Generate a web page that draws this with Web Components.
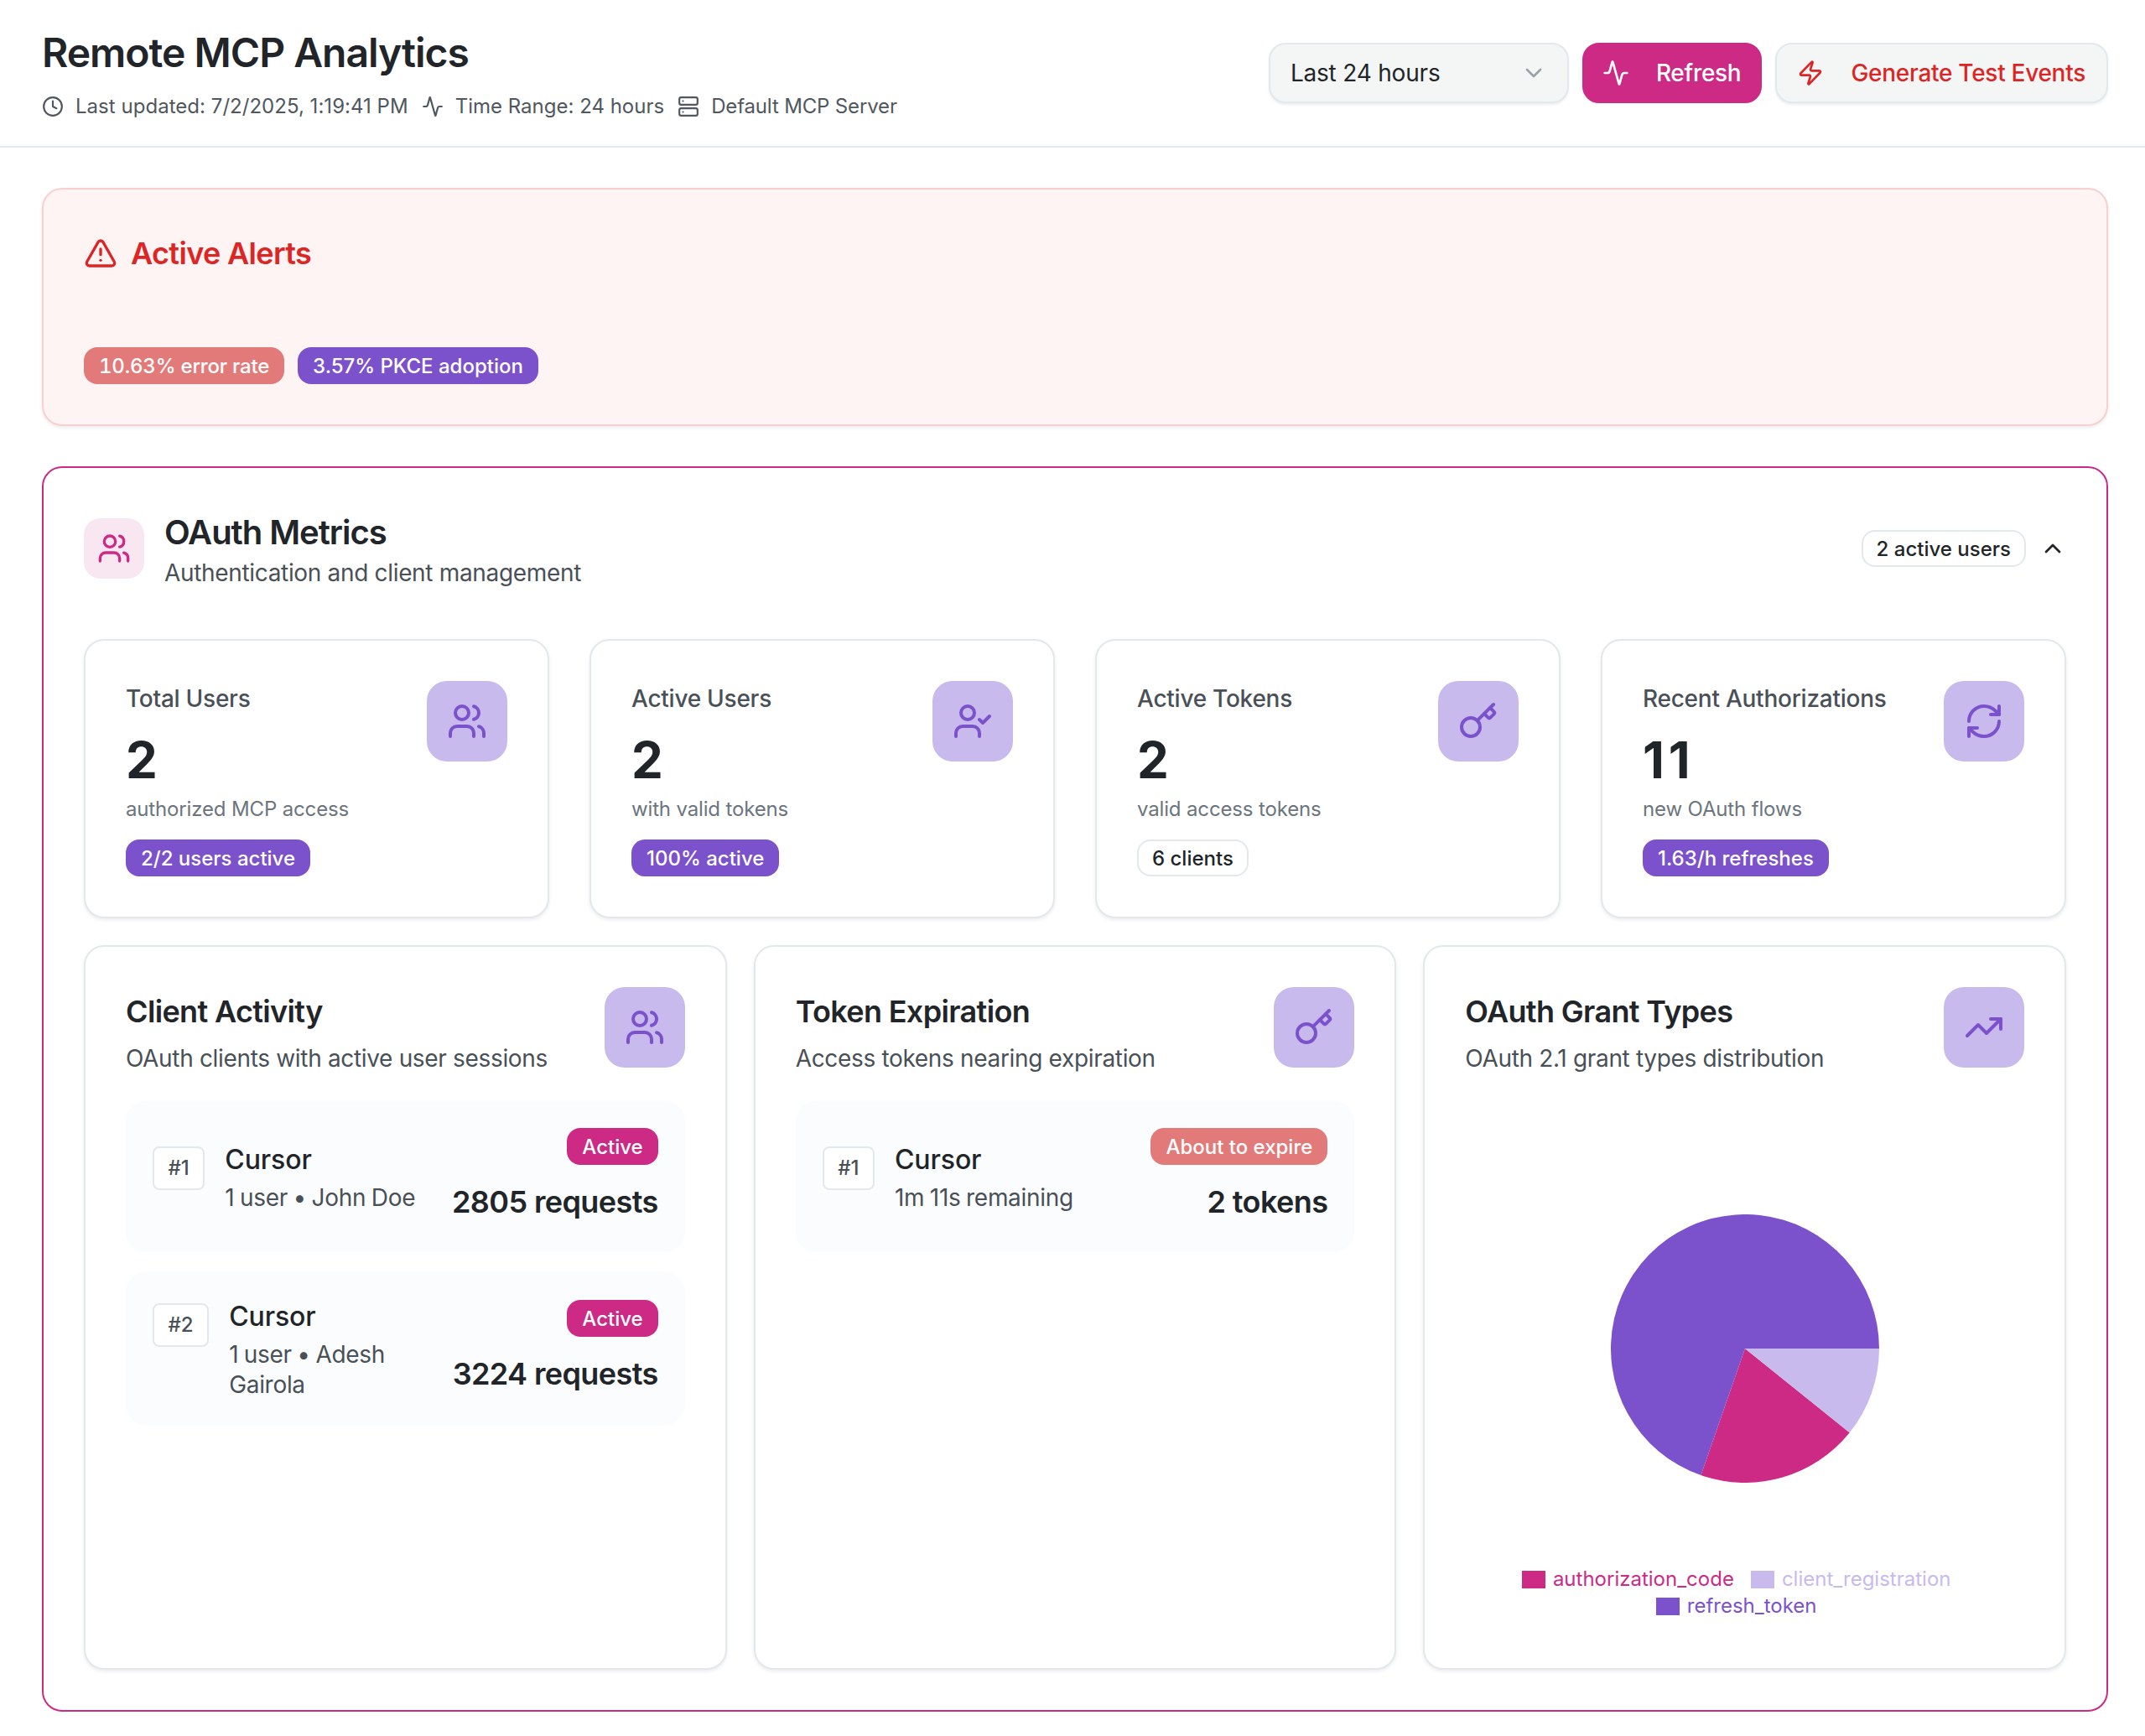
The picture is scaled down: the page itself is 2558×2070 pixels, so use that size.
<!DOCTYPE html>
<html>
<head>
<meta charset="utf-8">
<title>Remote MCP Analytics</title>
<style>
    html, body { margin: 0; padding: 0; background: #fff; }
    body { font-family: Inter, "Liberation Sans", sans-serif; color: #212529; }
</style>
</head>
<body>
<mcp-dashboard></mcp-dashboard>

<script>
const ICONS = {
    users: '<path d="M16 21v-2a4 4 0 0 0-4-4H6a4 4 0 0 0-4 4v2"/><circle cx="9" cy="7" r="4"/><path d="M22 21v-2a4 4 0 0 0-3-3.87"/><path d="M16 3.13a4 4 0 0 1 0 7.75"/>',
    userCheck: '<path d="M16 21v-2a4 4 0 0 0-4-4H6a4 4 0 0 0-4 4v2"/><circle cx="9" cy="7" r="4"/><polyline points="16 11 18 13 22 9"/>',
    key: '<path d="m15.5 7.5 2.3 2.3a1 1 0 0 0 1.4 0l2.1-2.1a1 1 0 0 0 0-1.4L19 4"/><path d="m21 2-9.6 9.6"/><circle cx="7.5" cy="15.5" r="5.5"/>',
    refresh: '<path d="M3 12a9 9 0 0 1 9-9 9.75 9.75 0 0 1 6.74 2.74L21 8"/><path d="M21 3v5h-5"/><path d="M21 12a9 9 0 0 1-9 9 9.75 9.75 0 0 1-6.74-2.74L3 16"/><path d="M8 16H3v5"/>',
    trending: '<polyline points="22 7 13.5 15.5 8.5 10.5 2 17"/><polyline points="16 7 22 7 22 13"/>',
    activity: '<path d="M22 12h-2.48a2 2 0 0 0-1.93 1.46l-2.35 8.36a.25.25 0 0 1-.48 0L9.24 2.18a.25.25 0 0 0-.48 0l-2.35 8.36A2 2 0 0 1 4.49 12H2"/>',
    clock: '<circle cx="12" cy="12" r="10"/><polyline points="12 6 12 12 16 14"/>',
    server: '<rect width="20" height="8" x="2" y="2" rx="2" ry="2"/><rect width="20" height="8" x="2" y="14" rx="2" ry="2"/><line x1="6" x2="6.01" y1="6" y2="6"/><line x1="6" x2="6.01" y1="18" y2="18"/>',
    zap: '<path d="M4 14a1 1 0 0 1-.78-1.63l9.9-10.2a.5.5 0 0 1 .86.46l-1.92 6.02A1 1 0 0 0 13 10h7a1 1 0 0 1 .78 1.63l-9.9 10.2a.5.5 0 0 1-.86-.46l1.92-6.02A1 1 0 0 0 11 14z"/>',
    alert: '<path d="m21.73 18-8-14a2 2 0 0 0-3.48 0l-8 14A2 2 0 0 0 4 21h16a2 2 0 0 0 1.73-3"/><path d="M12 9v4"/><path d="M12 17h.01"/>',
    chevronUp: '<path d="m18 15-6-6-6 6"/>',
    chevronDown: '<path d="m6 9 6 6 6-6"/>'
};

class UiIcon extends HTMLElement {
    connectedCallback() {
        const size = this.getAttribute('size') || 28;
        const root = this.shadowRoot || this.attachShadow({mode: 'open'});
        root.innerHTML = `
        <style>
            :host { display: block; flex: none; width: ${size}px; height: ${size}px; }
            svg { display: block; }
        </style>
        <svg width="${size}" height="${size}" viewBox="0 0 24 24" fill="none" stroke="currentColor" stroke-width="2" stroke-linecap="round" stroke-linejoin="round">${ICONS[this.getAttribute('name')]}</svg>`;
    }
}
customElements.define('ui-icon', UiIcon);

class UiBadge extends HTMLElement {
    constructor() {
        super();
        this.attachShadow({mode: 'open'}).innerHTML = `
        <style>
            :host {
                display: inline-flex; align-items: center; box-sizing: border-box;
                height: 44px; padding: 2px 18px 0; border-radius: 16px;
                font-size: 24px; line-height: 32px; font-weight: 500; white-space: nowrap;
                color: #fff; background: #7c51cc;
            }
            :host([tone="danger"]) { background: #e37a7a; }
            :host([tone="pink"]) { background: #cc2a85; }
            :host([tone="outline"]) { background: #fff; color: #212529; border: 2px solid #e3e8ec; padding: 2px 16px 0; }
        </style>
        <slot></slot>`;
    }
}
customElements.define('ui-badge', UiBadge);

class MetaItem extends HTMLElement {
    constructor() {
        super();
        this.attachShadow({mode: 'open'}).innerHTML = `
        <style>
            :host { display: flex; align-items: center; gap: 14px; font-size: 24px; line-height: 32px; color: #50575e; }
        </style>
        <ui-icon name="${this.getAttribute('icon')}" size="26"></ui-icon>
        <span><slot></slot></span>`;
    }
}
customElements.define('meta-item', MetaItem);

class ActionButton extends HTMLElement {
    constructor() {
        super();
        this.attachShadow({mode: 'open'}).innerHTML = `
        <style>
            :host {
                display: flex; align-items: center; gap: 32px; box-sizing: border-box;
                height: 72px; padding: 0 25px 0 24px; border-radius: 20px;
                font-size: 28px; font-weight: 500; letter-spacing: -0.28px; white-space: nowrap;
                background: #f4f6f6; border: 2px solid #e3e8ec; color: #dc2626;
                box-shadow: 0 2px 3px rgba(0,0,0,.07);
            }
            :host([primary]) { background: #cc2a85; border-color: #cc2a85; color: #fff; padding: 0 23px 0 22px; box-shadow: none; }
        </style>
        <ui-icon name="${this.getAttribute('icon')}" size="32"></ui-icon>
        <slot></slot>`;
    }
}
customElements.define('action-button', ActionButton);

class RangeSelect extends HTMLElement {
    constructor() {
        super();
        this.attachShadow({mode: 'open'}).innerHTML = `
        <style>
            :host {
                display: flex; align-items: center; justify-content: space-between; box-sizing: border-box;
                width: 358px; height: 72px; padding: 0 24px; border-radius: 20px;
                background: #f4f6f6; border: 2px solid #e3e8ec; font-size: 28px; letter-spacing: -0.2px; color: #212529;
                box-shadow: 0 2px 3px rgba(0,0,0,.07);
            }
            ui-icon { color: #9ca3a8; }
        </style>
        <slot></slot>
        <ui-icon name="chevronDown" size="32"></ui-icon>`;
    }
}
customElements.define('range-select', RangeSelect);

class TopHeader extends HTMLElement {
    constructor() {
        super();
        this.attachShadow({mode: 'open'}).innerHTML = `
        <style>
            :host {
                display: flex; align-items: center; justify-content: space-between; box-sizing: border-box;
                height: 176px; padding: 0 44px 0 50px; border-bottom: 2px solid #e3e8ec; background: #fff;
            }
            h1 { margin: 0; font-size: 48px; line-height: 64px; font-weight: 600; letter-spacing: -1px; color: #212529; }
            .meta { display: flex; gap: 16px; margin-top: 16px; }
            .actions { display: flex; gap: 16px; }
        </style>
        <div>
            <h1>Remote MCP Analytics</h1>
            <div class="meta">
                <meta-item icon="clock" style="letter-spacing: 0.03px">Last updated: 7/2/2025, 1:19:41 PM</meta-item>
                <meta-item icon="activity">Time Range: 24 hours</meta-item>
                <meta-item icon="server" style="letter-spacing: -0.15px">Default MCP Server</meta-item>
            </div>
        </div>
        <div class="actions">
            <range-select>Last 24 hours</range-select>
            <action-button icon="activity" primary>Refresh</action-button>
            <action-button icon="zap">Generate Test Events</action-button>
        </div>`;
    }
}
customElements.define('top-header', TopHeader);

class AlertPanel extends HTMLElement {
    constructor() {
        super();
        this.attachShadow({mode: 'open'}).innerHTML = `
        <style>
            :host {
                display: block; box-sizing: border-box; padding: 48px; height: 284px;
                background: #fdf4f3; border: 2px solid #f9cfcf; border-radius: 24px;
                box-shadow: 0 2px 4px rgba(0,0,0,.08);
            }
            .title { display: flex; align-items: center; gap: 16px; height: 56px; font-size: 36px; font-weight: 600; letter-spacing: -0.65px; color: #dc2626; }
            .badges { display: flex; gap: 16px; margin-top: 84px; }
        </style>
        <div class="title"><ui-icon name="alert" size="40"></ui-icon><span>Active Alerts</span></div>
        <div class="badges"><slot></slot></div>`;
    }
}
customElements.define('alert-panel', AlertPanel);

class StatCard extends HTMLElement {
    constructor() {
        super();
        this.attachShadow({mode: 'open'}).innerHTML = `
        <style>
            :host {
                display: flex; justify-content: space-between; align-items: flex-start; box-sizing: border-box;
                height: 333px; padding: 48px; background: #fff; border: 2px solid #e3e8ec; border-radius: 24px;
                box-shadow: 0 2px 4px rgba(0,0,0,.08);
            }
            .label { font-size: 28px; line-height: 42px; font-weight: 500; letter-spacing: -0.25px; color: #495057; }
            .value { margin-top: 16px; font-size: 60px; line-height: 72px; font-weight: 700; letter-spacing: 5px; color: #212529; }
            .note { margin-top: 5px; font-size: 24px; line-height: 36px; letter-spacing: -0.15px; color: #6c757d; }
            .tag { margin-top: 18px; }
            .box {
                display: flex; align-items: center; justify-content: center; flex: none;
                width: 96px; height: 96px; border-radius: 24px; background: #c8baec; color: #7c51cc;
            }
        </style>
        <div>
            <div class="label">${this.getAttribute('label')}</div>
            <div class="value">${this.getAttribute('value')}</div>
            <div class="note">${this.getAttribute('note')}</div>
            <div class="tag"><slot></slot></div>
        </div>
        <div class="box"><ui-icon name="${this.getAttribute('icon')}" size="48"></ui-icon></div>`;
    }
}
customElements.define('stat-card', StatCard);

class DetailCard extends HTMLElement {
    constructor() {
        super();
        this.attachShadow({mode: 'open'}).innerHTML = `
        <style>
            :host {
                display: block; box-sizing: border-box; height: 864px; padding: 48px;
                background: #fff; border: 2px solid #e3e8ec; border-radius: 24px;
                box-shadow: 0 2px 4px rgba(0,0,0,.08);
            }
            header { display: flex; justify-content: space-between; align-items: flex-start; margin-bottom: 31px; }
            h3 { margin: 0; font-size: 36px; line-height: 58px; font-weight: 600; letter-spacing: -0.65px; color: #212529; }
            p { margin: 7px 0 0; font-size: 28px; line-height: 40px; letter-spacing: -0.33px; color: #495057; }
            .box {
                display: flex; align-items: center; justify-content: center; flex: none;
                width: 96px; height: 96px; border-radius: 24px; background: #c8baec; color: #7c51cc;
            }
            .list { display: flex; flex-direction: column; gap: 24px; }
        </style>
        <header>
            <div>
                <h3>${this.getAttribute('heading')}</h3>
                <p>${this.getAttribute('sub')}</p>
            </div>
            <div class="box"><ui-icon name="${this.getAttribute('icon')}" size="48"></ui-icon></div>
        </header>
        <div class="list"><slot></slot></div>`;
    }
}
customElements.define('detail-card', DetailCard);

class RankRow extends HTMLElement {
    constructor() {
        super();
        this.attachShadow({mode: 'open'}).innerHTML = `
        <style>
            :host {
                display: flex; justify-content: space-between; align-items: center; gap: 16px;
                padding: 32px; background: #fbfcfe; border-radius: 24px;
            }
            .left { display: flex; gap: 24px; align-items: flex-start; min-width: 0; }
            .rank {
                flex: none; padding: 8px 16.5px; margin-top: 5px; border: 2px solid #e3e8ec; border-radius: 8px; background: #fff;
                font-size: 24px; line-height: 32px; font-weight: 500; color: #495057;
            }
            .name { font-size: 32px; line-height: 42px; font-weight: 500; letter-spacing: -0.1px; color: #212529; }
            .sub { margin: 6px 0 -2px; font-size: 28px; line-height: 36px; letter-spacing: -0.3px; word-spacing: -1px; color: #495057; }
            .right { flex: none; display: flex; flex-direction: column; align-items: flex-end; gap: 16px; }
            .amount { font-size: 36px; line-height: 56px; font-weight: 600; letter-spacing: -0.6px; color: #212529; white-space: nowrap; }
        </style>
        <div class="left">
            <div class="rank">${this.getAttribute('rank')}</div>
            <div>
                <div class="name">${this.getAttribute('name')}</div>
                <div class="sub">${this.getAttribute('sub')}</div>
            </div>
        </div>
        <div class="right">
            <slot></slot>
            <div class="amount">${this.getAttribute('amount')}</div>
        </div>`;
    }
}
customElements.define('rank-row', RankRow);

class GrantPie extends HTMLElement {
    constructor() {
        super();
        this.attachShadow({mode: 'open'}).innerHTML = `
        <style>
            :host { display: block; height: 627px; }
            svg { display: block; margin: 135px auto 0; }
            .legend { margin-top: 99px; text-align: center; font-size: 24px; line-height: 32px; }
            .item { display: inline-block; margin-right: 20px; }
            .swatch { display: inline-block; width: 28px; height: 21px; margin-right: 9px; vertical-align: -3px; background: currentColor; }
            .legend div { white-space: nowrap; }
        </style>
        <svg width="320" height="320" viewBox="-160 -160 320 320">
            <path d="M0 0 L124.7 100.3 A160 160 0 0 1 -52.6 151.1 Z" fill="#cc2a85"/>
            <path d="M0 0 L160 0 A160 160 0 0 1 124.7 100.3 Z" fill="#c8baec"/>
            <path d="M0 0 L-52.6 151.1 A160 160 0 1 1 160 0 Z" fill="#7c51cc"/>
        </svg>
        <div class="legend">
            <div>
                <span class="item" style="color:#cc2a85"><span class="swatch"></span>authorization_code</span><span class="item" style="color:#c8baec"><span class="swatch"></span>client_registration</span>
            </div>
            <div>
                <span class="item" style="color:#7c51cc"><span class="swatch"></span>refresh_token</span>
            </div>
        </div>`;
    }
}
customElements.define('grant-pie', GrantPie);

class MetricsSection extends HTMLElement {
    constructor() {
        super();
        this.attachShadow({mode: 'open'}).innerHTML = `
        <style>
            :host {
                display: block; box-sizing: border-box; padding: 48px; margin-top: 48px;
                background: #fff; border: 2px solid #cc2a85; border-radius: 24px;
            }
            header { display: flex; justify-content: space-between; align-items: center; height: 96px; margin-bottom: 60px; }
            .lead { display: flex; align-items: center; gap: 24px; }
            .box {
                display: flex; align-items: center; justify-content: center;
                width: 72px; height: 72px; border-radius: 20px; background: #f8e6f1; color: #cc2a85;
            }
            h2 { margin: 0; font-size: 40px; line-height: 58px; font-weight: 600; letter-spacing: -1.05px; color: #212529; }
            p { margin: 0; font-size: 28px; line-height: 38px; letter-spacing: -0.33px; color: #495057; }
            .tail { display: flex; align-items: center; gap: 16px; color: #212529; }
            .stats { display: grid; grid-template-columns: repeat(4, 1fr); gap: 48px; }
            .details { display: grid; grid-template-columns: repeat(3, 1fr); gap: 32px; margin-top: 32px; }
        </style>
        <header>
            <div class="lead">
                <div class="box"><ui-icon name="users" size="40"></ui-icon></div>
                <div>
                    <h2>OAuth Metrics</h2>
                    <p>Authentication and client management</p>
                </div>
            </div>
            <div class="tail">
                <ui-badge tone="outline">2 active users</ui-badge>
                <ui-icon name="chevronUp" size="32"></ui-icon>
            </div>
        </header>
        <div class="stats">
            <stat-card label="Total Users" value="2" note="authorized MCP access" icon="users"><ui-badge>2/2 users active</ui-badge></stat-card>
            <stat-card label="Active Users" value="2" note="with valid tokens" icon="userCheck"><ui-badge>100% active</ui-badge></stat-card>
            <stat-card label="Active Tokens" value="2" note="valid access tokens" icon="key"><ui-badge tone="outline">6 clients</ui-badge></stat-card>
            <stat-card label="Recent Authorizations" value="11" note="new OAuth flows" icon="refresh"><ui-badge>1.63/h refreshes</ui-badge></stat-card>
        </div>
        <div class="details">
            <detail-card heading="Client Activity" sub="OAuth clients with active user sessions" icon="users">
                <rank-row rank="#1" name="Cursor" sub="1 user • John Doe" amount="2805 requests"><ui-badge tone="pink">Active</ui-badge></rank-row>
                <rank-row rank="#2" name="Cursor" sub="1 user • Adesh Gairola" amount="3224 requests"><ui-badge tone="pink">Active</ui-badge></rank-row>
            </detail-card>
            <detail-card heading="Token Expiration" sub="Access tokens nearing expiration" icon="key">
                <rank-row rank="#1" name="Cursor" sub="1m 11s remaining" amount="2 tokens"><ui-badge tone="danger">About to expire</ui-badge></rank-row>
            </detail-card>
            <detail-card heading="OAuth Grant Types" sub="OAuth 2.1 grant types distribution" icon="trending">
                <grant-pie></grant-pie>
            </detail-card>
        </div>`;
    }
}
customElements.define('metrics-section', MetricsSection);

class McpDashboard extends HTMLElement {
    constructor() {
        super();
        this.attachShadow({mode: 'open'}).innerHTML = `
        <style>
            :host { display: block; min-height: 2070px; font-family: Inter, "Liberation Sans", sans-serif; }
            main { padding: 48px 44px 28px 50px; }
        </style>
        <top-header></top-header>
        <main>
            <alert-panel>
                <ui-badge tone="danger" style="font-variant-numeric: tabular-nums; letter-spacing: -0.2px">10.63% error rate</ui-badge>
                <ui-badge>3.57% PKCE adoption</ui-badge>
            </alert-panel>
            <metrics-section></metrics-section>
        </main>`;
    }
}
customElements.define('mcp-dashboard', McpDashboard);
</script>
</body>
</html>
